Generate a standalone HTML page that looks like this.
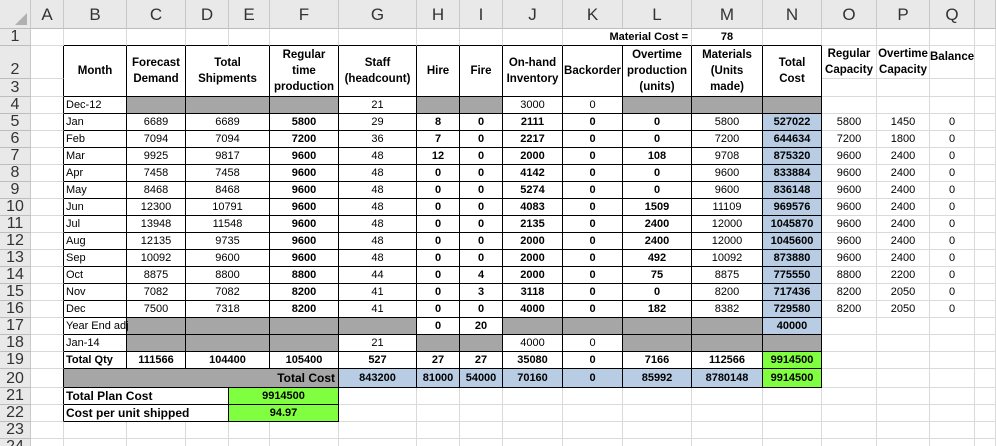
<!DOCTYPE html>
<html><head><meta charset="utf-8">
<style>
html,body{margin:0;padding:0;background:#fff;overflow:hidden;width:996px;height:446px}
table{width:996px;border-collapse:separate;border-spacing:0;table-layout:fixed;font-family:"Liberation Sans",Arial,sans-serif;font-size:11px;color:#000}
td,th{padding:0;border-right:1px solid #dadada;border-bottom:1px solid #dadada;text-align:center;white-space:nowrap;overflow:hidden;line-height:13px;box-sizing:border-box}
th{background:#e9e9e9;font-weight:normal;font-size:17px;color:#333;border-right:1px solid #c8c8c8;border-bottom:1px solid #bdbdbd}
th.r{font-size:16px;vertical-align:bottom;line-height:16px}
tr.h{height:29px}
tr{height:17px}
.k{border-right:1px solid #000;border-bottom:1px solid #000}
.kb{border-bottom:1px solid #000}
.kr{border-right:1px solid #000}
.b{font-weight:bold}
.l{text-align:left;padding-left:2px}
.rt{text-align:right;padding-right:3px}
.g{background:#a6a6a6}
.bl{background:#b8cce4}
.gr{background:#80ff40}
.hd{font-weight:bold;line-height:16px;font-size:11.5px}
.corner{position:relative}
.corner:after{content:"";position:absolute;right:3px;bottom:3px;border-left:12px solid transparent;border-bottom:12px solid #b0b0b0}
</style></head><body>
<table>
<colgroup>
<col style="width:31px"><col style="width:33px"><col style="width:63px"><col style="width:59px"><col style="width:43px"><col style="width:41px"><col style="width:69px"><col style="width:78px"><col style="width:43px"><col style="width:43px"><col style="width:60px"><col style="width:60px"><col style="width:69px"><col style="width:71px"><col style="width:59px"><col style="width:55px"><col style="width:53px"><col style="width:45px"><col style="width:21px">
</colgroup>
<tr class="h"><th class="corner"></th><th>A</th><th>B</th><th>C</th><th>D</th><th>E</th><th>F</th><th>G</th><th>H</th><th>I</th><th>J</th><th>K</th><th>L</th><th>M</th><th>N</th><th>O</th><th>P</th><th>Q</th><th></th></tr>
<tr style="height:17px"><th class="r">1</th><td></td><td class="kb"></td><td class="kb"></td><td class="kb"></td><td class="kb"></td><td class="kb"></td><td class="kb"></td><td class="kb"></td><td class="kb"></td><td class="kb"></td><td class="kb b rt" colspan="2">Material Cost =</td><td class="kb b">78</td><td class="kb"></td><td></td><td></td><td></td><td></td></tr>
<tr style="height:31px"><th class="r">2</th><td class="kr"></td>
<td class="k hd" rowspan="2">Month</td><td class="k hd" rowspan="2">Forecast<br>Demand</td><td class="k hd" rowspan="2" colspan="2">Total<br>Shipments</td><td class="k hd" rowspan="2">Regular<br>time<br>production</td><td class="k hd" rowspan="2">Staff<br>(headcount)</td><td class="k hd" rowspan="2">Hire</td><td class="k hd" rowspan="2">Fire</td><td class="k hd" rowspan="2">On-hand<br>Inventory</td><td class="k hd" rowspan="2">Backorder</td><td class="k hd" rowspan="2">Overtime<br>production<br>(units)</td><td class="k hd" rowspan="2">Materials<br>(Units<br>made)</td><td class="k hd" rowspan="2">Total<br>Cost</td>
<td class="hd">Regular<br>Capacity</td><td class="hd">Overtime<br>Capacity</td><td class="hd" style="vertical-align:top;padding-top:3px">Balance</td><td></td></tr>
<tr style="height:18px"><th class="r">3</th><td class="kr"></td><td></td><td></td><td></td><td></td></tr>
<tr><th class="r">4</th><td class="kr"></td><td class="k l">Dec-12</td><td class="k g"></td><td class="k g" colspan="2"></td><td class="k g"></td><td class="k">21</td><td class="k g"></td><td class="k g"></td><td class="k">3000</td><td class="k">0</td><td class="k g"></td><td class="k g"></td><td class="k g"></td><td></td><td></td><td></td><td></td></tr>
<tr><th class="r">5</th><td class="kr"></td><td class="k l">Jan</td><td class="k">6689</td><td class="k" colspan="2">6689</td><td class="k b">5800</td><td class="k">29</td><td class="k b">8</td><td class="k b">0</td><td class="k b">2111</td><td class="k b">0</td><td class="k b">0</td><td class="k">5800</td><td class="k b bl">527022</td><td>5800</td><td>1450</td><td>0</td><td></td></tr>
<tr><th class="r">6</th><td class="kr"></td><td class="k l">Feb</td><td class="k">7094</td><td class="k" colspan="2">7094</td><td class="k b">7200</td><td class="k">36</td><td class="k b">7</td><td class="k b">0</td><td class="k b">2217</td><td class="k b">0</td><td class="k b">0</td><td class="k">7200</td><td class="k b bl">644634</td><td>7200</td><td>1800</td><td>0</td><td></td></tr>
<tr><th class="r">7</th><td class="kr"></td><td class="k l">Mar</td><td class="k">9925</td><td class="k" colspan="2">9817</td><td class="k b">9600</td><td class="k">48</td><td class="k b">12</td><td class="k b">0</td><td class="k b">2000</td><td class="k b">0</td><td class="k b">108</td><td class="k">9708</td><td class="k b bl">875320</td><td>9600</td><td>2400</td><td>0</td><td></td></tr>
<tr><th class="r">8</th><td class="kr"></td><td class="k l">Apr</td><td class="k">7458</td><td class="k" colspan="2">7458</td><td class="k b">9600</td><td class="k">48</td><td class="k b">0</td><td class="k b">0</td><td class="k b">4142</td><td class="k b">0</td><td class="k b">0</td><td class="k">9600</td><td class="k b bl">833884</td><td>9600</td><td>2400</td><td>0</td><td></td></tr>
<tr><th class="r">9</th><td class="kr"></td><td class="k l">May</td><td class="k">8468</td><td class="k" colspan="2">8468</td><td class="k b">9600</td><td class="k">48</td><td class="k b">0</td><td class="k b">0</td><td class="k b">5274</td><td class="k b">0</td><td class="k b">0</td><td class="k">9600</td><td class="k b bl">836148</td><td>9600</td><td>2400</td><td>0</td><td></td></tr>
<tr><th class="r">10</th><td class="kr"></td><td class="k l">Jun</td><td class="k">12300</td><td class="k" colspan="2">10791</td><td class="k b">9600</td><td class="k">48</td><td class="k b">0</td><td class="k b">0</td><td class="k b">4083</td><td class="k b">0</td><td class="k b">1509</td><td class="k">11109</td><td class="k b bl">969576</td><td>9600</td><td>2400</td><td>0</td><td></td></tr>
<tr><th class="r">11</th><td class="kr"></td><td class="k l">Jul</td><td class="k">13948</td><td class="k" colspan="2">11548</td><td class="k b">9600</td><td class="k">48</td><td class="k b">0</td><td class="k b">0</td><td class="k b">2135</td><td class="k b">0</td><td class="k b">2400</td><td class="k">12000</td><td class="k b bl">1045870</td><td>9600</td><td>2400</td><td>0</td><td></td></tr>
<tr><th class="r">12</th><td class="kr"></td><td class="k l">Aug</td><td class="k">12135</td><td class="k" colspan="2">9735</td><td class="k b">9600</td><td class="k">48</td><td class="k b">0</td><td class="k b">0</td><td class="k b">2000</td><td class="k b">0</td><td class="k b">2400</td><td class="k">12000</td><td class="k b bl">1045600</td><td>9600</td><td>2400</td><td>0</td><td></td></tr>
<tr><th class="r">13</th><td class="kr"></td><td class="k l">Sep</td><td class="k">10092</td><td class="k" colspan="2">9600</td><td class="k b">9600</td><td class="k">48</td><td class="k b">0</td><td class="k b">0</td><td class="k b">2000</td><td class="k b">0</td><td class="k b">492</td><td class="k">10092</td><td class="k b bl">873880</td><td>9600</td><td>2400</td><td>0</td><td></td></tr>
<tr><th class="r">14</th><td class="kr"></td><td class="k l">Oct</td><td class="k">8875</td><td class="k" colspan="2">8800</td><td class="k b">8800</td><td class="k">44</td><td class="k b">0</td><td class="k b">4</td><td class="k b">2000</td><td class="k b">0</td><td class="k b">75</td><td class="k">8875</td><td class="k b bl">775550</td><td>8800</td><td>2200</td><td>0</td><td></td></tr>
<tr><th class="r">15</th><td class="kr"></td><td class="k l">Nov</td><td class="k">7082</td><td class="k" colspan="2">7082</td><td class="k b">8200</td><td class="k">41</td><td class="k b">0</td><td class="k b">3</td><td class="k b">3118</td><td class="k b">0</td><td class="k b">0</td><td class="k">8200</td><td class="k b bl">717436</td><td>8200</td><td>2050</td><td>0</td><td></td></tr>
<tr><th class="r">16</th><td class="kr"></td><td class="k l">Dec</td><td class="k">7500</td><td class="k" colspan="2">7318</td><td class="k b">8200</td><td class="k">41</td><td class="k b">0</td><td class="k b">0</td><td class="k b">4000</td><td class="k b">0</td><td class="k b">182</td><td class="k">8382</td><td class="k b bl">729580</td><td>8200</td><td>2050</td><td>0</td><td></td></tr>
<tr><th class="r">17</th><td class="kr"></td><td class="k l" style="overflow:visible;position:relative;z-index:1">Year End adj</td><td class="k g"></td><td class="k g" colspan="2"></td><td class="k g"></td><td class="k g"></td><td class="k b">0</td><td class="k b">20</td><td class="k g"></td><td class="k g"></td><td class="k g"></td><td class="k g"></td><td class="k b bl">40000</td><td></td><td></td><td></td><td></td></tr>
<tr><th class="r">18</th><td class="kr"></td><td class="k l">Jan-14</td><td class="k g"></td><td class="k g" colspan="2"></td><td class="k g"></td><td class="k">21</td><td class="k g"></td><td class="k g"></td><td class="k">4000</td><td class="k">0</td><td class="k g"></td><td class="k g"></td><td class="k g"></td><td></td><td></td><td></td><td></td></tr>
<tr><th class="r">19</th><td class="kr"></td><td class="k l b">Total Qty</td><td class="k b">111566</td><td class="k b" colspan="2">104400</td><td class="k b">105400</td><td class="k b">527</td><td class="k b">27</td><td class="k b">27</td><td class="k b">35080</td><td class="k b">0</td><td class="k b">7166</td><td class="k b">112566</td><td class="k b gr">9914500</td><td></td><td></td><td></td><td></td></tr>
<tr style="height:19px"><th class="r">20</th><td class="kr"></td><td class="k g b rt" colspan="5" style="font-size:12px">Total Cost</td><td class="k b bl">843200</td><td class="k b bl">81000</td><td class="k b bl">54000</td><td class="k b bl">70160</td><td class="k b bl">0</td><td class="k b bl">85992</td><td class="k b bl">8780148</td><td class="k b gr">9914500</td><td></td><td></td><td></td><td></td></tr>
<tr><th class="r">21</th><td class="kr"></td><td class="k l b" colspan="3" style="font-size:12px">Total Plan Cost</td><td class="k b gr" colspan="2">9914500</td><td></td><td></td><td></td><td></td><td></td><td></td><td></td><td></td><td></td><td></td><td></td><td></td></tr>
<tr><th class="r">22</th><td class="kr"></td><td class="k l b" colspan="3" style="font-size:12px">Cost per unit shipped</td><td class="k b gr" colspan="2">94.97</td><td></td><td></td><td></td><td></td><td></td><td></td><td></td><td></td><td></td><td></td><td></td><td></td></tr>
<tr><th class="r">23</th><td></td><td></td><td></td><td></td><td></td><td></td><td></td><td></td><td></td><td></td><td></td><td></td><td></td><td></td><td></td><td></td><td></td><td></td></tr>
<tr><th class="r">24</th><td></td><td></td><td></td><td></td><td></td><td></td><td></td><td></td><td></td><td></td><td></td><td></td><td></td><td></td><td></td><td></td><td></td><td></td></tr>
</table>
</body></html>
